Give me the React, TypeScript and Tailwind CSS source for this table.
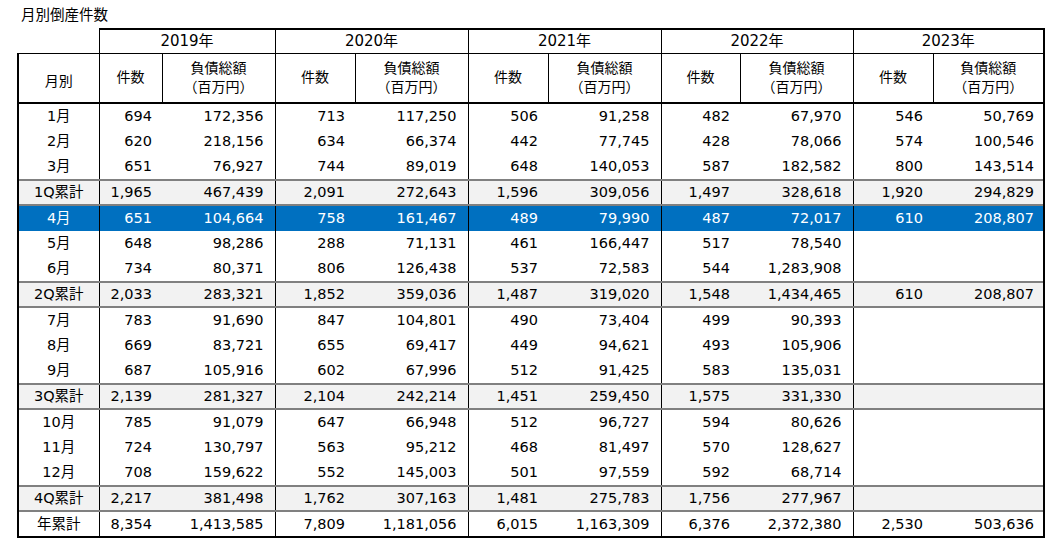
const FONT = { fontFamily: '"DejaVu Sans", "Noto Sans CJK JP", sans-serif' };

type Row = { label: string; kind: 'm' | 'q' | 'hl' | 'y'; vals: (string | null)[] };

const rows: Row[] = [
  { label: '1月', kind: 'm', vals: ['694', '172,356', '713', '117,250', '506', '91,258', '482', '67,970', '546', '50,769'] },
  { label: '2月', kind: 'm', vals: ['620', '218,156', '634', '66,374', '442', '77,745', '428', '78,066', '574', '100,546'] },
  { label: '3月', kind: 'm', vals: ['651', '76,927', '744', '89,019', '648', '140,053', '587', '182,582', '800', '143,514'] },
  { label: '1Q累計', kind: 'q', vals: ['1,965', '467,439', '2,091', '272,643', '1,596', '309,056', '1,497', '328,618', '1,920', '294,829'] },
  { label: '4月', kind: 'hl', vals: ['651', '104,664', '758', '161,467', '489', '79,990', '487', '72,017', '610', '208,807'] },
  { label: '5月', kind: 'm', vals: ['648', '98,286', '288', '71,131', '461', '166,447', '517', '78,540', null, null] },
  { label: '6月', kind: 'm', vals: ['734', '80,371', '806', '126,438', '537', '72,583', '544', '1,283,908', null, null] },
  { label: '2Q累計', kind: 'q', vals: ['2,033', '283,321', '1,852', '359,036', '1,487', '319,020', '1,548', '1,434,465', '610', '208,807'] },
  { label: '7月', kind: 'm', vals: ['783', '91,690', '847', '104,801', '490', '73,404', '499', '90,393', null, null] },
  { label: '8月', kind: 'm', vals: ['669', '83,721', '655', '69,417', '449', '94,621', '493', '105,906', null, null] },
  { label: '9月', kind: 'm', vals: ['687', '105,916', '602', '67,996', '512', '91,425', '583', '135,031', null, null] },
  { label: '3Q累計', kind: 'q', vals: ['2,139', '281,327', '2,104', '242,214', '1,451', '259,450', '1,575', '331,330', null, null] },
  { label: '10月', kind: 'm', vals: ['785', '91,079', '647', '66,948', '512', '96,727', '594', '80,626', null, null] },
  { label: '11月', kind: 'm', vals: ['724', '130,797', '563', '95,212', '468', '81,497', '570', '128,627', null, null] },
  { label: '12月', kind: 'm', vals: ['708', '159,622', '552', '145,003', '501', '97,559', '592', '68,714', null, null] },
  { label: '4Q累計', kind: 'q', vals: ['2,217', '381,498', '1,762', '307,163', '1,481', '275,783', '1,756', '277,967', null, null] },
  { label: '年累計', kind: 'y', vals: ['8,354', '1,413,585', '7,809', '1,181,056', '6,015', '1,163,309', '6,376', '2,372,380', '2,530', '503,636'] },
];

const years = ['2019年', '2020年', '2021年', '2022年', '2023年'];

function rowClass(kind: Row['kind']) {
  if (kind === 'q') return 'bg-[#f2f2f2] border-y-2 border-y-[#808080]';
  if (kind === 'hl') return 'bg-[#0070c0] text-white';
  if (kind === 'y') return 'border-b-2 border-b-black';
  return '';
}

export default function App() {
  return (
    <div className="w-[1058px] h-[549px] bg-white text-black" style={FONT}>
      <div className="pl-[21px] pt-[7px] h-[28px] text-[14.5px] leading-[17px]">月別倒産件数</div>
      <div className="pl-[17px]">
        <table className="table-fixed border-collapse w-[1026px] text-[14.5px]">
          <colgroup>
            <col className="w-[81px]" />
            <col className="w-[63px]" />
            <col className="w-[113px]" />
            <col className="w-[80px]" />
            <col className="w-[113px]" />
            <col className="w-[80px]" />
            <col className="w-[113px]" />
            <col className="w-[79px]" />
            <col className="w-[113px]" />
            <col className="w-[80px]" />
            <col className="w-[111px]" />
          </colgroup>
          <thead>
            <tr className="h-[24px]">
              <th className="p-0" />
              {years.map((y, i) => (
                <th
                  key={y}
                  colSpan={2}
                  className={`p-0 font-normal text-[15px] leading-[22px] border-t-2 border-t-black border-b border-b-black border-l border-l-black ${i === 4 ? 'border-r-2 border-r-black' : ''}`}
                >
                  {y}
                </th>
              ))}
            </tr>
            <tr className="h-[50px] border-b-2 border-b-black">
              <th className="p-0 pt-[8px] font-normal text-[14px] border-l-2 border-l-black border-t border-t-black border-r border-r-black">月別</th>
              {years.map((y, i) => (
                <>
                  <th key={y + 'a'} className="p-0 font-normal text-[14px] border-r border-r-black">件数</th>
                  <th
                    key={y + 'b'}
                    className={`p-0 font-normal text-[14px] leading-[19px] ${i === 4 ? 'border-r-2' : 'border-r'} border-r-black`}
                  >
                    負債総額
                    <br />
                    （百万円）
                  </th>
                </>
              ))}
            </tr>
          </thead>
          <tbody>
            {rows.map((r) => (
              <tr key={r.label} className={`h-[25.5px] ${rowClass(r.kind)}`}>
                <td className="p-0 text-center border-l-2 border-l-black border-r border-r-black leading-[20px]">{r.label}</td>
                {r.vals.map((v, j) => (
                  <td
                    key={j}
                    className={`p-0 text-right leading-[20px] ${j % 2 === 0 ? 'pr-[10px]' : j === 9 ? 'pr-[9px] border-r-2 border-r-black' : 'pr-[11px] border-r border-r-black'}`}
                  >
                    {v ?? ''}
                  </td>
                ))}
              </tr>
            ))}
          </tbody>
        </table>
      </div>
    </div>
  );
}
